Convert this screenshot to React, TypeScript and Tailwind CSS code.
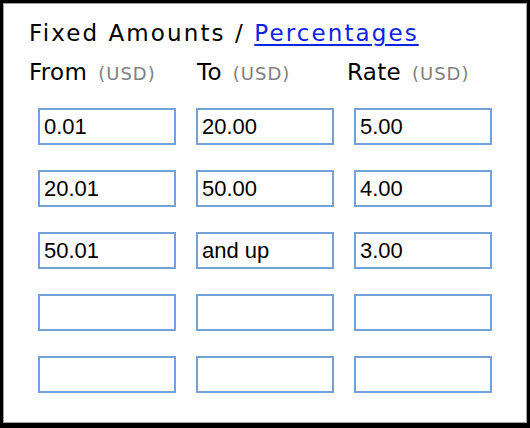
import React from "react"

const rows: string[][] = [
  ["0.01", "20.00", "5.00"],
  ["20.01", "50.00", "4.00"],
  ["50.01", "and up", "3.00"],
  ["", "", ""],
  ["", "", ""],
]

const labels = [
  { name: "From", w: "w-[168px]" },
  { name: "To", w: "w-[150px]" },
  { name: "Rate", w: "w-[150px]" },
]

export default function App() {
  return (
    <div className="w-[530px] h-[428px] bg-black pt-[3px] px-[3px] pb-[5px]">
      <div className="h-full bg-white border border-[#a0a0a0] font-['DejaVu_Sans',sans-serif] text-black">
        {/* Title */}
        <div className="pl-[25px] pt-[16px] text-[23px] leading-[26px] tracking-[2.1px]">
          Fixed Amounts /{" "}
          <a href="#" className="text-[#0a24e6] underline underline-offset-[3px]">
            Percentages
          </a>
        </div>

        {/* Column labels */}
        <div className="flex pl-[25px] mt-[13px] leading-[26px]">
          {labels.map((l) => (
            <div key={l.name} className={l.w}>
              <span className="text-[23px] tracking-[0.3px]">{l.name}</span>
              <span className="ml-[11px] text-[18px] tracking-[1px] text-[#7f7f7f]">(USD)</span>
            </div>
          ))}
        </div>

        {/* Rate table */}
        <div className="grid grid-cols-[138px_138px_138px] gap-x-[20px] gap-y-[25px] pl-[34px] mt-[20px]">
          {rows.map((r, i) =>
            r.map((v, j) => (
              <input
                key={`${i}-${j}`}
                readOnly
                value={v}
                className="w-[138px] h-[37px] border-2 border-[#74a2d8] px-[4px] text-[22px] font-['Liberation_Sans',sans-serif] text-black bg-white outline-none"
              />
            ))
          )}
        </div>
      </div>
    </div>
  )
}
